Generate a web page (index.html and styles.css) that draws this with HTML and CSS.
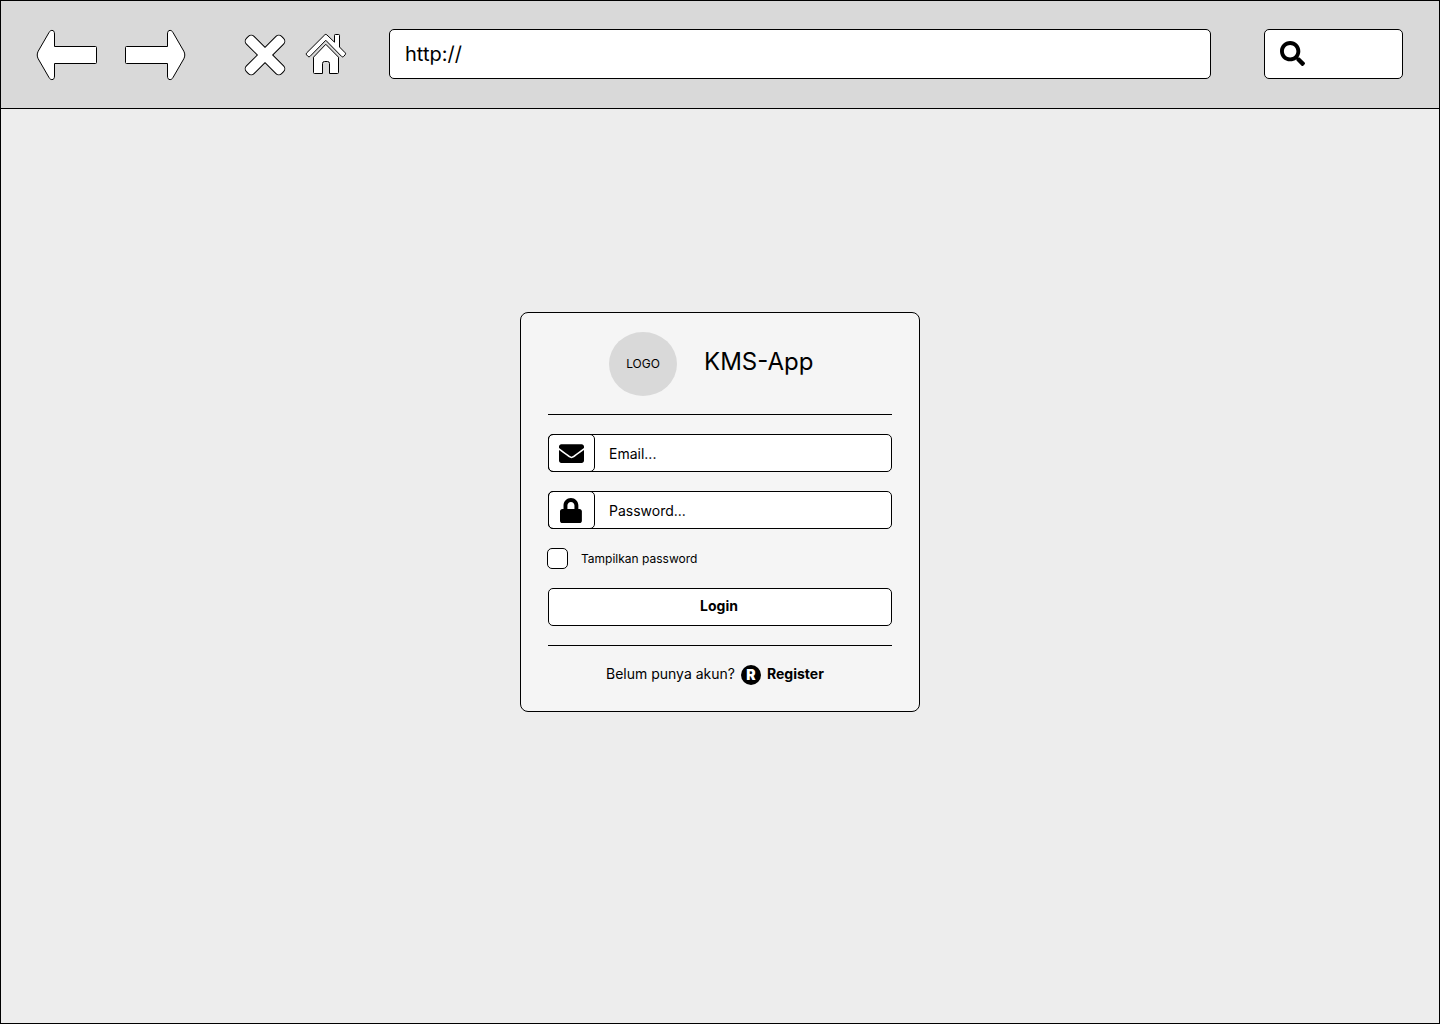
FILE: index.html
```html
<!DOCTYPE html>
<html lang="id">
<head>
<meta charset="utf-8">
<meta name="viewport" content="width=device-width, initial-scale=1">
<title>KMS-App</title>
<link rel="stylesheet" href="styles.css">
</head>
<body>
<div class="window">
  <header class="toolbar">
    <nav class="history">
      <button class="icon-button" type="button" aria-label="Back">
        <svg class="outline" width="62" height="54" viewBox="0 0 62 54"><path d="M18.5 19.5H59.5a1 1 0 0 1 1 1V35.5a1 1 0 0 1-1 1H18.5V49C18.5 51.6 17.5 52.6 16 52.6C14.8 52.6 13.8 52 13 50.5L2.2 31.8C.9 29.3 .9 26.7 2.2 24.2L13 5.5C13.8 4 14.8 3.4 16 3.4C17.5 3.4 18.5 4.4 18.5 7Z"/></svg>
      </button>
      <button class="icon-button" type="button" aria-label="Forward">
        <svg class="outline" width="62" height="54" viewBox="0 0 62 54"><path d="M43.5 19.5H2.5a1 1 0 0 0-1 1V35.5a1 1 0 0 0 1 1H43.5V49C43.5 51.6 44.5 52.6 46 52.6C47.2 52.6 48.2 52 49 50.5L59.8 31.8C61.1 29.3 61.1 26.7 59.8 24.2L49 5.5C48.2 4 47.2 3.4 46 3.4C44.5 3.4 43.5 4.4 43.5 7Z"/></svg>
      </button>
    </nav>
    <div class="actions">
      <button class="icon-button" type="button" aria-label="Stop">
        <svg width="42" height="44" viewBox="0 0 42 44">
          <g transform="translate(21 23) rotate(45)">
            <rect x="-25.4" y="-5.9" width="50.8" height="11.8" rx="4.5"/>
            <rect x="-5.9" y="-25.4" width="11.8" height="50.8" rx="4.5"/>
            <rect x="-24.4" y="-4.9" width="48.8" height="9.8" rx="3.5" fill="#fff"/>
            <rect x="-4.9" y="-24.4" width="9.8" height="48.8" rx="3.5" fill="#fff"/>
          </g>
        </svg>
      </button>
      <button class="icon-button" type="button" aria-label="Home">
        <svg class="outline" width="42" height="42" viewBox="0 0 42 42">
          <path d="M19.8 1.8Q20.8 .9 21.8 1.8L29.500 9.200V2.300Q29.500 1.500 30.300 1.500H33.700Q34.500 1.500 34.500 2.300V14L40.200 19.800Q41 20.700 40.200 21.700L38.500 23.600Q37.600 24.300 36.700 23.500L20.800 7.300L4.900 23.500Q4 24.300 3.100 23.500L1.500 21.800Q.9 20.800 1.700 19.900Z"/>
          <path d="M20.800 11.300L33.500 24.200V39.500Q33.500 40.500 32.500 40.500H24.500V30.500Q24.500 28.500 22.500 28.500H19.500Q17.500 28.500 17.500 30.500V40.500H9.500Q8.500 40.500 8.500 39.500V24.200Z"/>
        </svg>
      </button>
    </div>
    <input class="address" type="text" aria-label="Address" value="http://">
    <label class="search">
      <svg width="25" height="25" viewBox="0 0 512 512" aria-hidden="true"><path d="M505 442.700L405.300 343c-4.500-4.500-10.600-7-17-7H372c27.600-35.300 44-79.700 44-128C416 93.100 322.900 0 208 0S0 93.100 0 208s93.100 208 208 208c48.300 0 92.700-16.400 128-44v16.300c0 6.400 2.500 12.500 7 17l99.700 99.700c9.400 9.400 24.600 9.400 33.900 0l28.300-28.300c9.400-9.400 9.400-24.600.1-34zM208 336c-70.700 0-128-57.200-128-128 0-70.700 57.200-128 128-128 70.700 0 128 57.200 128 128 0 70.700-57.200 128-128 128z"/></svg>
      <input class="search-input" type="search" aria-label="Search">
    </label>
  </header>

  <main class="page">
    <section class="card">
      <div class="brand">
        <div class="logo">LOGO</div>
        <h1 class="title">KMS-App</h1>
      </div>
      <form class="form">
        <hr class="rule">
        <div class="field">
          <label class="field-icon" for="email" aria-label="Email">
            <svg width="25" height="25" viewBox="0 0 512 512"><path d="M502.300 190.800c3.900-3.100 9.700-.2 9.700 4.700V400c0 26.500-21.500 48-48 48H48c-26.500 0-48-21.500-48-48V195.600c0-5 5.700-7.800 9.700-4.700 22.400 17.400 52.100 39.500 154.100 113.600 21.100 15.400 56.700 47.800 92.200 47.600 35.700.3 72-32.800 92.300-47.600 102-74.100 131.600-96.300 154-113.700zM256 320c23.200.4 56.600-29.200 73.400-41.400 132.700-96.300 142.800-104.700 173.400-128.700 5.800-4.500 9.200-11.500 9.200-18.900v-19c0-26.500-21.500-48-48-48H48c-26.500 0-48 21.500-48 48v19c0 7.400 3.400 14.300 9.200 18.900 30.600 23.900 40.700 32.400 173.400 128.700 16.800 12.200 50.200 41.800 73.400 41.400z"/></svg>
          </label>
          <input class="field-input" id="email" type="email" placeholder="Email...">
        </div>
        <div class="field">
          <label class="field-icon" for="password" aria-label="Password">
            <svg width="23" height="25" viewBox="0 0 448 512" preserveAspectRatio="xMinYMid"><path d="M400 224h-24v-72C376 68.200 307.800 0 224 0S72 68.200 72 152v72H48c-26.500 0-48 21.500-48 48v192c0 26.500 21.500 48 48 48h352c26.500 0 48-21.500 48-48V272c0-26.500-21.500-48-48-48zm-104 0H152v-72c0-39.700 32.300-72 72-72s72 32.300 72 72v72z"/></svg>
          </label>
          <input class="field-input" id="password" type="password" placeholder="Password...">
        </div>
        <label class="show-password">
          <input class="checkbox" type="checkbox">
          <span>Tampilkan password</span>
        </label>
        <button class="login" type="submit">Login</button>
        <hr class="rule">
        <p class="signup">
          <span class="signup-text">Belum punya akun?</span>
          <a class="register" href="#"><span class="badge" aria-hidden="true">R</span><span class="signup-text">Register</span></a>
        </p>
      </form>
    </section>
  </main>
</div>
</body>
</html>
```

FILE: styles.css
```css
*,
*::before,
*::after {
  box-sizing: border-box;
}

body {
  margin: 0;
  background: #ededed;
  color: #000;
  font-family: Inter, "Liberation Sans", sans-serif;
  font-size: 14px;
  line-height: 20px;
}

svg {
  display: block;
  flex: none;
}

input,
button {
  font: inherit;
  color: inherit;
}

.window {
  display: flex;
  flex-direction: column;
  min-height: 100vh;
  border: 1px solid #000;
}

/* Browser toolbar */

.toolbar {
  display: flex;
  align-items: center;
  padding: 28px 36px 29px 35px;
  height: 108px;
  border-bottom: 1px solid #000;
  background: #d9d9d9;
}

.history,
.actions {
  display: flex;
  align-items: center;
  gap: 26px;
}

.actions {
  gap: 19px;
  margin: 0 42px 0 58px;
}

.icon-button {
  padding: 0;
  border: 0;
  background: none;
  cursor: pointer;
}

.outline {
  fill: #fff;
  stroke: #000;
  stroke-width: 1;
  stroke-linejoin: round;
}

.address,
.search {
  height: 50px;
  border: 1px solid #000;
  border-radius: 5px;
  background: #fff;
}

.address {
  flex: 1;
  min-width: 0;
  padding: 0 15px;
  font-size: 20px;
}

.search {
  display: flex;
  align-items: center;
  gap: 8px;
  width: 139px;
  margin-left: 53px;
  padding: 0 15px 2px;
}

.search-input {
  flex: 1;
  min-width: 0;
  padding: 0;
  border: 0;
  outline: 0;
  background: none;
}

/* Login card */

.page {
  flex: 1;
  display: flex;
  align-items: center;
  justify-content: center;
  padding-bottom: 108px;
}

.card {
  width: 400px;
  padding: 19px 27px 26px;
  border: 1px solid #000;
  border-radius: 8px;
  background: #f5f5f5;
}

.brand {
  display: flex;
  align-items: center;
  gap: 27px;
  margin-bottom: 18px;
  padding-left: 61px;
}

.logo {
  display: flex;
  align-items: center;
  justify-content: center;
  width: 68px;
  height: 64px;
  border-radius: 50%;
  background: #d9d9d9;
  font-size: 12px;
}

.title {
  margin: 0;
  padding-bottom: 4px;
  font-size: 24px;
  font-weight: 400;
  line-height: 28px;
}

.form {
  display: flex;
  flex-direction: column;
  gap: 19px;
}

.rule {
  width: 100%;
  height: 1px;
  margin: 0;
  border: 0;
  background: #000;
}

.field {
  display: flex;
  height: 38px;
  border: 1px solid #000;
  border-radius: 5px;
  background: #fff;
}

.field-icon {
  display: flex;
  align-items: center;
  justify-content: center;
  width: 47px;
  margin: -1px 0 -1px -1px;
  border: 1px solid #000;
  border-radius: 5px;
}

.field-input {
  flex: 1;
  min-width: 0;
  padding: 2px 14px 0;
  border: 0;
  outline: 0;
  background: none;
}

.field-input::placeholder {
  color: #000;
  opacity: 1;
}

.show-password {
  display: flex;
  align-items: center;
  gap: 13px;
  margin-left: -1px;
  font-size: 12px;
}

.checkbox {
  appearance: none;
  width: 21px;
  height: 21px;
  margin: 0;
  border: 1px solid #000;
  border-radius: 5px;
  background: #fff;
}

.checkbox:checked {
  background: #000;
  box-shadow: inset 0 0 0 4px #fff;
}

.login {
  height: 38px;
  padding: 0 2px 2px 0;
  border: 1px solid #000;
  border-radius: 5px;
  background: #fff;
  font-weight: 700;
  cursor: pointer;
}

.signup {
  display: flex;
  align-items: center;
  gap: 6px;
  margin: 0;
  padding-left: 58px;
}

.signup-text {
  padding-bottom: 2px;
  line-height: 18px;
}

.register {
  display: flex;
  align-items: center;
  gap: 6px;
  color: inherit;
  font-weight: 700;
  text-decoration: none;
}

.badge {
  width: 20px;
  height: 20px;
  border-radius: 50%;
  background: #000;
  color: #fff;
  font-weight: 900;
  text-align: center;
}
```
